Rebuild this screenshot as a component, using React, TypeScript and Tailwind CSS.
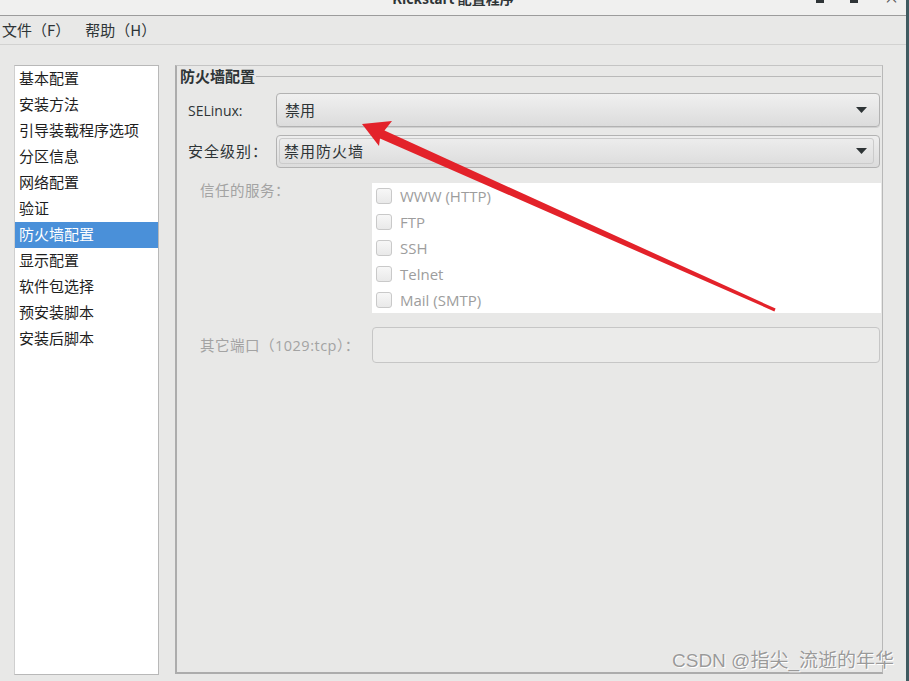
import React from "react";

const CJK = { fontFamily: '"Noto Sans CJK SC", "Noto Sans", sans-serif' };
const LAT = { fontFamily: '"Open Sans", "Noto Sans CJK SC", sans-serif' };

const navItems = [
  "基本配置",
  "安装方法",
  "引导装载程序选项",
  "分区信息",
  "网络配置",
  "验证",
  "防火墙配置",
  "显示配置",
  "软件包选择",
  "预安装脚本",
  "安装后脚本",
];

const services = ["WWW (HTTP)", "FTP", "SSH", "Telnet", "Mail (SMTP)"];

function Arrow() {
  return (
    <svg width="11" height="6" viewBox="0 0 11 6" className="shrink-0">
      <polygon points="0,0 11,0 5.5,6" fill="#2e3436" />
    </svg>
  );
}

export default function App() {
  return (
    <div className="relative w-[909px] h-[681px] overflow-hidden flex bg-[#e8e8e7]" style={CJK}>
      <div className="flex-1 flex flex-col">
        {/* title bar */}
        <div className="h-[16px] shrink-0 bg-[#f0f0ef] border-b border-[#9c9c9c] flex items-start overflow-hidden">
          <div className="w-[92px] shrink-0" />
          <div className="flex-1 flex justify-center">
            <span className="-mt-[11px] text-[14px] leading-[18px] font-bold text-[#2e3436]">
              Kickstart 配置程序
            </span>
          </div>
          <div className="w-[92px] shrink-0 flex items-start gap-[26px] pl-[2px]">
            <div className="w-[8px] h-[3px] bg-[#2e3436]" />
            <div className="w-[8px] h-[3px] bg-[#2e3436]" />
            <span className="-mt-[12px] text-[15px] leading-[18px] text-[#555]">×</span>
          </div>
        </div>
        {/* menu bar */}
        <div className="h-[29px] shrink-0 border-b border-[#d2d2d1] flex items-center text-[15px] text-[#2e3436] pl-[2px] gap-[15px]">
          <span>文件（F）</span>
          <span>帮助（H）</span>
        </div>
        {/* main */}
        <div className="flex pt-[20px] pl-[14px] gap-[16px]">
          {/* nav list */}
          <div className="w-[145px] h-[610px] bg-white border border-[#b8b8b8] border-l-[#cfcfcf] flex flex-col">
            {navItems.map((t, i) => (
              <div
                key={t}
                className={
                  i === 6
                    ? "h-[26px] flex items-center pl-[4px] pb-[2px] text-[15px] bg-[#4a90d9] text-white"
                    : "h-[26px] flex items-center pl-[4px] pb-[2px] text-[15px] text-[#1e1e1e]"
                }
              >
                {t}
              </div>
            ))}
          </div>
          {/* frame */}
          <div className="w-[708px] h-[609px] border-t border-t-[#c4c4c4] border-l-2 border-l-[#acacac] border-r border-r-[#b8b8b8] border-b-2 border-b-[#acacac] flex flex-col pr-[1px]">
            <div className="h-[20px] flex items-center">
              <span className="pl-[3px] pr-[1px] text-[15px] font-bold text-[#2e3436] leading-[18px]">防火墙配置</span>
              <div className="flex-1 h-px bg-[#b9b9b9] mt-[1px]" />
            </div>
            <div className="flex flex-col pt-[7px]">
              {/* SELinux */}
              <div className="flex items-center pl-[11px] pr-[1px] h-[34px]">
                <span className="w-[88px] text-[14px] text-[#2e3436]" style={LAT}>SELinux:</span>
                <div className="flex-1 h-[34px] rounded-[4px] border border-[#b2b2b2] bg-gradient-to-b from-[#f0f0f0] to-[#dcdcdc] shadow-[0_1px_0_#d0d0d0] flex items-center pl-[8px] pr-[12px]">
                  <span className="flex-1 text-[15px] text-[#2e3436]">禁用</span>
                  <Arrow />
                </div>
              </div>
              {/* security level */}
              <div className="flex items-center pl-[11px] pr-[1px] h-[33px] mt-[8px]">
                <span className="w-[88px] text-[15px] text-[#2e3436] tracking-[1px]">安全级别：</span>
                <div className="flex-1 h-[33px] rounded-[4px] border border-[#b2b2b2] bg-gradient-to-b from-[#eeeeee] to-[#dcdcdc] p-[2px] pb-[3px] pr-[5px] flex">
                  <div className="flex-1 rounded-[3px] border border-[#cbcbcb] flex items-center pl-[4px] pr-[6px]">
                    <span className="flex-1 text-[15px] text-[#2e3436] tracking-[1px]">禁用防火墙</span>
                    <Arrow />
                  </div>
                </div>
              </div>
              {/* trusted services */}
              <div className="flex items-start pl-[23px] mt-[15px]">
                <span className="w-[172px] text-[14.5px] leading-[14px] text-[#a3a3a3] tracking-[0.5px]">信任的服务：</span>
                <div className="flex-1 h-[130px] bg-white flex flex-col">
                  {services.map((s) => (
                    <div key={s} className="h-[26px] flex items-center pl-[4px] gap-[8px]">
                      <div className="w-[16px] h-[16px] rounded-[3px] border border-[#c9c9c9] bg-gradient-to-b from-[#f7f7f7] to-[#e9e9e9]" />
                      <span className="text-[15px] text-[#9d9d9d]" style={LAT}>{s}</span>
                    </div>
                  ))}
                </div>
              </div>
              {/* other ports */}
              <div className="flex items-center pl-[23px] pr-[1px] mt-[14px]">
                <span className="w-[172px] text-[14.5px] text-[#a3a3a3] tracking-[0.5px]">
                  其它端口（<span style={LAT}>1029:tcp</span>）：
                </span>
                <div className="flex-1 h-[36px] rounded-[4px] border border-[#c6c6c6] bg-[#ebebea]" />
              </div>
            </div>
          </div>
        </div>
      </div>
      <div className="w-[3px] bg-[#3f5a60] shrink-0" />

      {/* red annotation arrow */}
      <svg className="absolute left-0 top-0 pointer-events-none" width="909" height="681">
        <polygon
          points="362,124 392,121 384.5,130.5 775.6,308.6 774.4,311.4 380,138.5 379,146"
          fill="#e3222a"
        />
      </svg>

      {/* watermark */}
      <div
        className="absolute left-[672px] top-[649px] text-[19px] leading-[24px] text-[#9a9a9a] whitespace-nowrap"
        style={{ fontFamily: '"Liberation Sans", "Noto Sans CJK SC", sans-serif', textShadow: "0 0 1px #fff, 1px 1px 0 #fff" }}
      >
        CSDN @指尖_流逝的年华
      </div>
    </div>
  );
}
